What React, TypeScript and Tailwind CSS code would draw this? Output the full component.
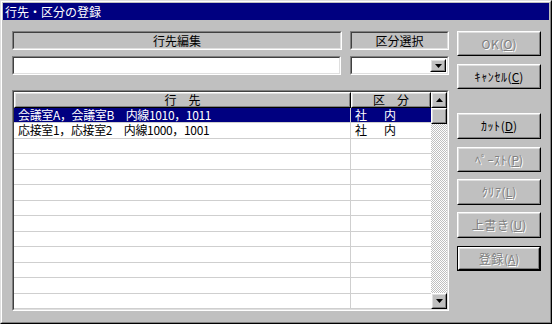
import React from "react";

type Row = { dest: string; kind: string; selected?: boolean };

const rows: Row[] = [
  { dest: "会議室A，会議室B　内線1010，1011", kind: "社内", selected: true },
  { dest: "応接室1，応接室2　内線1000，1001", kind: "社内" },
  ...Array.from({ length: 11 }, () => ({ dest: "", kind: "" })),
];

function Arrow({ up }: { up?: boolean }) {
  return (
    <svg width="7" height="4" viewBox="0 0 7 4" className="block">
      {up ? <path d="M3.5 0 L7 4 L0 4 Z" fill="#000" /> : <path d="M0 0 L7 0 L3.5 4 Z" fill="#000" />}
    </svg>
  );
}

function Raised({ className, children }: { className?: string; children?: React.ReactNode }) {
  return (
    <div className={"border border-t-white border-l-white border-r-black border-b-black bg-[#c0c0c0] " + (className ?? "")}>
      <div className="flex h-full items-center justify-center border border-t-[#dfdfdf] border-l-[#dfdfdf] border-r-[#808080] border-b-[#808080]">
        {children}
      </div>
    </div>
  );
}

function Sunken({ className, children }: { className?: string; children?: React.ReactNode }) {
  return (
    <div className={"border border-t-[#808080] border-l-[#808080] border-r-white border-b-white " + (className ?? "")}>
      <div className="flex h-full border border-t-[#404040] border-l-[#404040] border-r-[#dfdfdf] border-b-[#dfdfdf]">
        {children}
      </div>
    </div>
  );
}

function Btn({
  label,
  hot,
  disabled,
  isDefault,
  className,
}: {
  label: string;
  hot: string;
  disabled?: boolean;
  isDefault?: boolean;
  className?: string;
}) {
  const text = (
    <span className={disabled ? "text-[#808080] [text-shadow:1px_1px_0_#fff]" : "text-black"}>
      <span className="tracking-[0.6px]">{label}</span>(<span className="underline">{hot}</span>)
    </span>
  );
  if (isDefault) {
    return (
      <div className={"border border-black " + (className ?? "")}>
        <Raised className="h-full">{text}</Raised>
      </div>
    );
  }
  return <Raised className={className}>{text}</Raised>;
}

export default function App() {
  return (
    <div className="h-[324px] w-[552px] border border-t-[#dfdfdf] border-l-[#dfdfdf] border-r-black border-b-black bg-[#c0c0c0] font-[family-name:'Noto_Sans_CJK_JP',sans-serif] text-[12px] leading-none">
      <div className="h-full border border-t-white border-l-white border-r-[#808080] border-b-[#808080] p-[1px]">
        <div className="flex h-[17px] items-center bg-[#000080] pl-[2px] text-white">行先・区分の登録</div>

        <div className="flex pl-[9px] pt-[11px]">
          <div className="w-[437px]">
            <div className="flex h-[19px] gap-[8px]">
              <Sunken className="w-[330px]">
                <div className="flex w-full items-center justify-center">行先編集</div>
              </Sunken>
              <Sunken className="w-[99px]">
                <div className="flex w-full items-center justify-center">区分選択</div>
              </Sunken>
            </div>

            <div className="mt-[6px] flex h-[19px] gap-[9px]">
              <Sunken className="w-[329px]">
                <div className="w-full bg-white" />
              </Sunken>
              <Sunken className="w-[99px]">
                <div className="flex w-full justify-end bg-white p-[1px]">
                  <Raised className="w-[16px]">
                    <Arrow />
                  </Raised>
                </div>
              </Sunken>
            </div>

            <Sunken className="mt-[15px] h-[221px] w-[437px]">
              <div className="flex w-full bg-white">
                <div className="flex-1">
                  <div className="flex h-[15.5px] leading-[10px]">
                    <Raised className="w-[337px]">
                      <span>行　先</span>
                    </Raised>
                    <Raised className="w-[80px]">
                      <span>区　分</span>
                    </Raised>
                  </div>
                  {rows.map((r, i) => (
                    <div
                      key={i}
                      className={
                        "flex h-[15.5px] " + (r.selected ? "bg-[#000080] text-white" : "text-black")
                      }
                    >
                      <div className="flex w-[337px] items-center border-r border-b border-[#cfcfcf] pl-[4px] tracking-[-0.35px] whitespace-pre">
                        {r.dest}
                      </div>
                      <div className="flex w-[80px] items-center border-b border-[#cfcfcf] pl-[4px]">
                        {r.kind && (
                          <>
                            <span>{r.kind[0]}</span>
                            <span className="ml-[17px]">{r.kind[1]}</span>
                          </>
                        )}
                      </div>
                    </div>
                  ))}
                </div>

                <div className="flex w-[16px] flex-col bg-[repeating-conic-gradient(#c0c0c0_0_25%,#ffffff_0_50%)] bg-[length:2px_2px]">
                  <Raised className="h-[15.5px]">
                    <Arrow up />
                  </Raised>
                  <Raised className="h-[16px]" />
                  <div className="flex-1" />
                  <Raised className="h-[16px]">
                    <Arrow />
                  </Raised>
                </div>
              </div>
            </Sunken>
          </div>

          <div className="ml-[8px] flex w-[84px] flex-col">
            <Btn label="OK" hot="O" disabled className="h-[25px]" />
            <Btn label="ｷｬﾝｾﾙ" hot="C" className="mt-[8px] h-[25px]" />
            <Btn label="ｶｯﾄ" hot="D" className="mt-[24px] h-[26px]" />
            <Btn label="ﾍﾟｰｽﾄ" hot="P" disabled className="mt-[8px] h-[25px]" />
            <Btn label="ｸﾘｱ" hot="L" disabled className="mt-[7px] h-[26px]" />
            <Btn label="上書き" hot="U" disabled className="mt-[7px] h-[26px]" />
            <Btn label="登録" hot="A" disabled isDefault className="mt-[8px] h-[25px]" />
          </div>
        </div>
      </div>
    </div>
  );
}
